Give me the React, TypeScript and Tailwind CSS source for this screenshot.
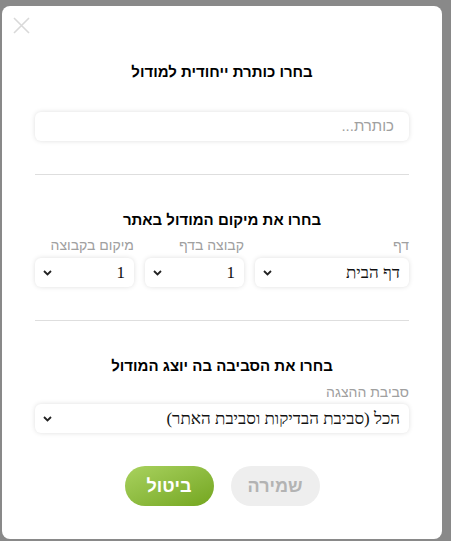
import React from "react"

const SANS = "font-['Liberation_Sans',Arial,sans-serif]"
const SERIF = "font-['Liberation_Serif','Times_New_Roman',serif]"

function Chevron() {
  return (
    <svg width="9" height="6" viewBox="0 0 9 6" aria-hidden className="shrink-0">
      <path d="M1 1l3.5 3.5L8 1" fill="none" stroke="#222" strokeWidth="1.8" />
    </svg>
  )
}

function FakeSelect({ value, className = "" }: { value: string; className?: string }) {
  return (
    <div
      className={`flex h-[29px] items-center justify-between rounded-[6px] bg-white pl-[8px] pr-[9px] shadow-[0_0_5px_rgba(0,0,0,0.13)] ${className}`}
    >
      <span className={`${SERIF} text-[17px] leading-none text-[#111]`}>{value}</span>
      <Chevron />
    </div>
  )
}

function SectionTitle({ children, className = "" }: { children: React.ReactNode; className?: string }) {
  return (
    <h2 className={`${SANS} h-5 text-center text-[15px] font-bold leading-5 text-black ${className}`}>
      {children}
    </h2>
  )
}

function Label({ children }: { children: React.ReactNode }) {
  return <div className={`${SANS} h-[18px] text-[14px] leading-[18px] text-[#a0a0a0]`}>{children}</div>
}

export default function App() {
  return (
    <div className="h-[541px] w-[451px] overflow-hidden bg-[#898989] pl-[2px] pt-[6px]">
      <div dir="rtl" className="relative h-[533px] w-[440px] rounded-[8px] bg-white px-[33px] pt-[56px]">
        <button className="absolute left-[11px] top-[11px]" aria-label="close">
          <svg width="17" height="17" viewBox="0 0 17 17">
            <path d="M1 1l15 15M16 1L1 16" stroke="#d9d9d9" strokeWidth="1.6" />
          </svg>
        </button>

        <SectionTitle>בחרו כותרת ייחודית למודול</SectionTitle>
        <div className="mt-[30px] flex h-[29px] items-center rounded-[6px] bg-white pr-[15px] shadow-[0_0_5px_rgba(0,0,0,0.13)]">
          <span className={`${SANS} text-[15px] text-[#a0a0a0]`}>כותרת...</span>
        </div>

        <div className="mt-[33px] h-px bg-[#dedede]" />

        <SectionTitle className="mt-[35px]">בחרו את מיקום המודול באתר</SectionTitle>
        <div className="mt-[6px] flex gap-[11px]">
          <div className="w-[154px]">
            <Label>דף</Label>
            <FakeSelect value="דף הבית" className="mt-[4px]" />
          </div>
          <div className="w-[99px]">
            <Label>קבוצה בדף</Label>
            <FakeSelect value="1" className="mt-[4px]" />
          </div>
          <div className="w-[99px]">
            <Label>מיקום בקבוצה</Label>
            <FakeSelect value="1" className="mt-[4px]" />
          </div>
        </div>

        <div className="mt-[33px] h-px bg-[#dedede]" />

        <SectionTitle className="mt-[35px]">בחרו את הסביבה בה יוצג המודול</SectionTitle>
        <div className="mt-[7px]">
          <Label>סביבת ההצגה</Label>
          <FakeSelect value="הכל (סביבת הבדיקות וסביבת האתר)" className="mt-[3px]" />
        </div>

        <div className="mt-[33px] flex justify-center gap-[17px]">
          <button
            className={`${SANS} h-[40px] w-[89px] rounded-full bg-[#eeeeee] text-[18px] font-bold text-[#b3b3b3]`}
          >
            שמירה
          </button>
          <button
            className={`${SANS} h-[40px] w-[89px] rounded-full bg-gradient-to-br from-[#a9d25e] to-[#74a61c] text-[18px] font-bold text-white`}
          >
            ביטול
          </button>
        </div>
      </div>
    </div>
  )
}
